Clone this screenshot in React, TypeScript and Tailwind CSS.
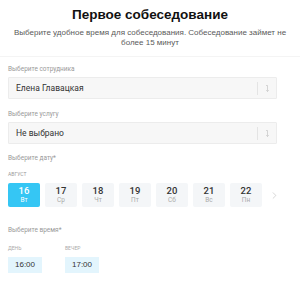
import { ChevronRight } from 'lucide-react';

const dates = [
    { d: '16', w: 'Вт' },
    { d: '17', w: 'Ср' },
    { d: '18', w: 'Чт' },
    { d: '19', w: 'Пт' },
    { d: '20', w: 'Сб' },
    { d: '21', w: 'Вс' },
    { d: '22', w: 'Пн' },
];

function SelectBox({ value }: { value: string }) {
    return (
        <div className="mt-[3px] h-[22px] w-[269px] flex items-center bg-[#f7f7f7] border border-[#ececec] rounded-[1px]">
            <span className="flex-1 pl-[7px] text-[8.5px] text-[#333] font-['Roboto',sans-serif]">{value}</span>
            <div className="h-[13px] w-px bg-[#e4e4e4]" />
            <div className="w-[18px] flex justify-center">
                <svg width="5" height="7" viewBox="0 0 5 7" fill="none" stroke="#c4c4c4" strokeWidth="0.7">
                    <path d="M1 0.5h1.5v6" />
                    <path d="M1.2 5.2l1.3 1.3L3.8 5.2" />
                </svg>
            </div>
        </div>
    );
}

function Label({ children, className = '' }: { children: React.ReactNode; className?: string }) {
    return <div className={`h-[10px] leading-[10px] text-[6.5px] text-[#9a9a9a] font-['Roboto',sans-serif] ${className}`}>{children}</div>;
}

export default function App() {
    return (
        <div className="w-[300px] h-[293px] bg-white font-['Liberation_Sans',sans-serif] overflow-hidden">
            <div className="pt-[6px] pb-[8px] border-b border-[#f4f4f4] text-center">
                <h1 className="h-[18px] leading-[18px] text-[13.5px] font-bold text-[#111]">Первое собеседование</h1>
                <p className="mt-[4px] px-[12px] text-[8px] leading-[10px] text-[#5a5a5a]">
                    Выберите удобное время для собеседования. Собеседование займет не более 15 минут
                </p>
            </div>

            <div className="px-[8px] pt-[7px]">
                <Label>Выберите сотрудника</Label>
                <SelectBox value="Елена Главацкая" />

                <Label className="mt-[10px]">Выберите услугу</Label>
                <SelectBox value="Не выбрано" />

                <Label className="mt-[9px]">Выберите дату*</Label>
                <div className="mt-[7px] h-[8px] leading-[8px] text-[5px] text-[#999] uppercase font-['Roboto',sans-serif]">Август</div>
                <div className="mt-[5px] flex items-center gap-[5px] font-['Roboto',sans-serif]">
                    {dates.map((item, index) => (
                        <div
                            key={item.d}
                            className={`w-[32px] h-[24px] rounded-[2px] flex flex-col items-center justify-center ${index === 0 ? 'bg-[#35c6f4]' : 'bg-[#f4f6f8]'}`}
                        >
                            <span className={`text-[9.5px] leading-[11px] font-medium ${index === 0 ? 'text-white' : 'text-[#333]'}`}>{item.d}</span>
                            <span className={`text-[6.5px] leading-[9px] ${index === 0 ? 'text-white' : 'text-[#aaa]'}`}>{item.w}</span>
                        </div>
                    ))}
                    <ChevronRight className="ml-[2px] text-[#bbb]" size={11} strokeWidth={1.3} />
                </div>

                <Label className="mt-[18px]">Выберите время*</Label>
                <div className="mt-[9px] flex gap-[23px]">
                    <div>
                        <div className="h-[8px] leading-[8px] text-[5px] text-[#aaa] uppercase font-['Roboto',sans-serif]">День</div>
                        <div className="mt-[5px] w-[34px] h-[16px] bg-[#e3f5fd] flex items-center justify-center text-[8px] text-[#333]">16:00</div>
                    </div>
                    <div>
                        <div className="h-[8px] leading-[8px] text-[5px] text-[#aaa] uppercase font-['Roboto',sans-serif]">Вечер</div>
                        <div className="mt-[5px] w-[34px] h-[16px] bg-[#e3f5fd] flex items-center justify-center text-[8px] text-[#333]">17:00</div>
                    </div>
                </div>
            </div>
        </div>
    );
}
